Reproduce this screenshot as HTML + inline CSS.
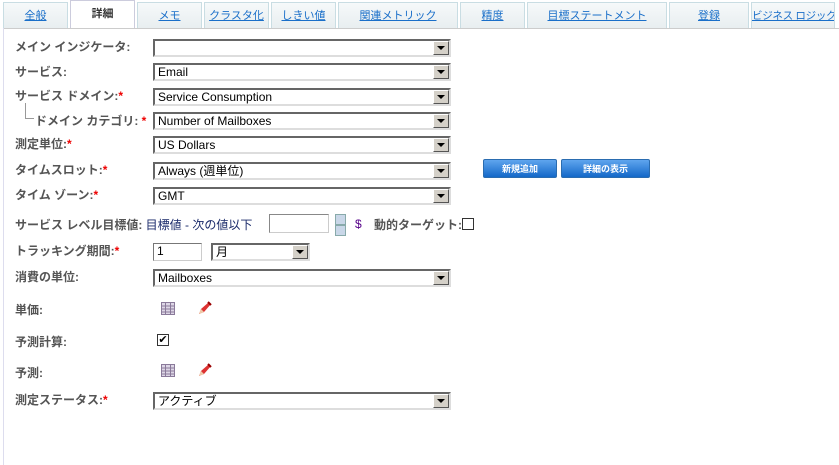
<!DOCTYPE html>
<html><head><meta charset="utf-8"><style>
body{margin:0;width:839px;height:465px;background:#fff;font-family:"Liberation Sans","Noto Sans CJK JP",sans-serif;position:relative;overflow:hidden}
.tab{position:absolute;top:2px;height:26px;background:linear-gradient(#f6f9fa,#e8eef0);border:1px solid #c9dde3;border-bottom:none;box-sizing:border-box;text-align:center;font-size:11px;line-height:26px;color:#1a6fc9;text-decoration:underline;white-space:nowrap;overflow:hidden}
.act{background:#fff;color:#333;font-weight:bold;text-decoration:none;height:28px;top:0;border-color:#ccd;z-index:2}
.line{position:absolute;left:3px;top:28px;width:836px;height:1px;background:#ccc}
.lb{position:absolute;left:3px;top:28px;width:1px;height:437px;background:#dde}
.l{position:absolute;left:15px;font-size:12px;font-weight:bold;color:#555;white-space:nowrap}
.r{color:#e00}
.sel,.inp{position:absolute;left:153px;width:298px;height:18px;border:2px solid #666;border-right-color:#ddd;border-bottom-color:#ddd;box-sizing:border-box;font-size:12px;line-height:14px;padding-left:3px;color:#000;background:#fff}
.sel:after{content:"";position:absolute;right:0;top:0;width:14px;height:12px;background:#d4d0c8;border:1px solid;border-color:#fff #555 #555 #fff}
.sel b{position:absolute;right:4px;top:5px;width:0;height:0;border-left:4px solid transparent;border-right:4px solid transparent;border-top:4px solid #000;z-index:1}
.btn{position:absolute;top:159px;height:19px;background:linear-gradient(#5fa5ee,#1468c8);border:1px solid #2a6cb0;border-radius:2px;color:#fff;font-size:9px;font-weight:bold;text-align:center;line-height:18px;box-sizing:border-box}
.ic{position:absolute}
</style></head><body>
<div class="tab" style="left:3px;width:65px">全般</div>
<div class="tab act" style="left:70px;width:65px">詳細</div>
<div class="tab" style="left:137px;width:65px">メモ</div>
<div class="tab" style="left:204px;width:65px">クラスタ化</div>
<div class="tab" style="left:271px;width:65px">しきい値</div>
<div class="tab" style="left:338px;width:120px">関連メトリック</div>
<div class="tab" style="left:460px;width:65px">精度</div>
<div class="tab" style="left:527px;width:140px">目標ステートメント</div>
<div class="tab" style="left:669px;width:80px">登録</div>
<div class="tab" style="left:751px;width:84px;font-size:10.5px;letter-spacing:-0.3px">ビジネス ロジック</div>
<div class="line"></div><div class="lb"></div>

<div class="l" style="top:38px">メイン インジケータ:</div>
<div class="sel" style="top:39px"><b></b></div>
<div class="l" style="top:63px">サービス:</div>
<div class="sel" style="top:63px">Email<b></b></div>
<div class="l" style="top:87px">サービス ドメイン:<span class="r">*</span></div>
<div class="sel" style="top:88px">Service Consumption<b></b></div>
<div style="position:absolute;left:25px;top:103px;width:8px;height:15px;border-left:1px solid #999;border-bottom:1px solid #999"></div>
<div class="l" style="top:112px;left:35px">ドメイン カテゴリ: <span class="r">*</span></div>
<div class="sel" style="top:112px">Number of Mailboxes<b></b></div>
<div class="l" style="top:135px">測定単位:<span class="r">*</span></div>
<div class="sel" style="top:136px">US Dollars<b></b></div>
<div class="l" style="top:161px">タイムスロット:<span class="r">*</span></div>
<div class="sel" style="top:162px">Always (週単位)<b></b></div>
<div class="btn" style="left:483px;width:74px">新規追加</div>
<div class="btn" style="left:561px;width:89px">詳細の表示</div>
<div class="l" style="top:186px">タイム ゾーン:<span class="r">*</span></div>
<div class="sel" style="top:187px">GMT<b></b></div>

<div class="l" style="top:216px">サービス レベル目標値: <span style="font-weight:normal;color:#1a2a6a">目標値 - 次の値以下</span></div>
<div style="position:absolute;left:269px;top:214px;width:60px;height:19px;border:1px solid #888;border-right-color:#ccc;border-bottom-color:#ccc;box-sizing:border-box"></div>
<div style="position:absolute;left:335px;top:214px;width:9px;height:9px;background:#c9d7e8;border:1px solid #8aa"></div>
<div style="position:absolute;left:335px;top:225px;width:9px;height:9px;background:#c9d7e8;border:1px solid #8aa"></div>
<div style="position:absolute;left:355px;top:217px;font-size:12px;color:#508">$</div>
<div class="l" style="top:216px;left:374px">動的ターゲット:</div>
<div style="position:absolute;left:462px;top:218px;width:12px;height:12px;border:1px solid #333;box-sizing:border-box"></div>

<div class="l" style="top:242px">トラッキング期間:<span class="r">*</span></div>
<div class="inp" style="top:243px;width:49px;border-width:1px;border-color:#777 #ccc #ccc #777">1</div>
<div class="sel" style="top:243px;left:211px;width:99px">月<b></b></div>
<div class="l" style="top:268px">消費の単位:</div>
<div class="sel" style="top:269px">Mailboxes<b></b></div>
<div class="l" style="top:301px">単価:</div>
<svg class="ic" style="left:161px;top:302px" width="14" height="13"><rect x="0.5" y="0.5" width="13" height="12" fill="#ddd6e6" stroke="#8a7a9a"/><path d="M0 4h14M0 7h14M0 10h14M4.5 0v13M9.5 0v13" stroke="#8a7a9a"/></svg>
<svg class="ic" style="left:197px;top:301px" width="15" height="15"><path d="M2 13l2-5 8-7 2 2-7 8z" fill="#d33"/><path d="M2 13l2-5 3 3z" fill="#eca"/><path d="M11 1l3 3" stroke="#900" stroke-width="2"/></svg>
<div class="l" style="top:333px">予測計算:</div>
<div style="position:absolute;left:157px;top:334px;width:12px;height:12px;border:1px solid #333;box-sizing:border-box;font-size:11px;line-height:10px;text-align:center">✔</div>
<div class="l" style="top:364px">予測:</div>
<svg class="ic" style="left:161px;top:364px" width="14" height="13"><rect x="0.5" y="0.5" width="13" height="12" fill="#ddd6e6" stroke="#8a7a9a"/><path d="M0 4h14M0 7h14M0 10h14M4.5 0v13M9.5 0v13" stroke="#8a7a9a"/></svg>
<svg class="ic" style="left:197px;top:363px" width="15" height="15"><path d="M2 13l2-5 8-7 2 2-7 8z" fill="#d33"/><path d="M2 13l2-5 3 3z" fill="#eca"/><path d="M11 1l3 3" stroke="#900" stroke-width="2"/></svg>
<div class="l" style="top:391px">測定ステータス:<span class="r">*</span></div>
<div class="sel" style="top:392px">アクティブ<b></b></div>
</body></html>
